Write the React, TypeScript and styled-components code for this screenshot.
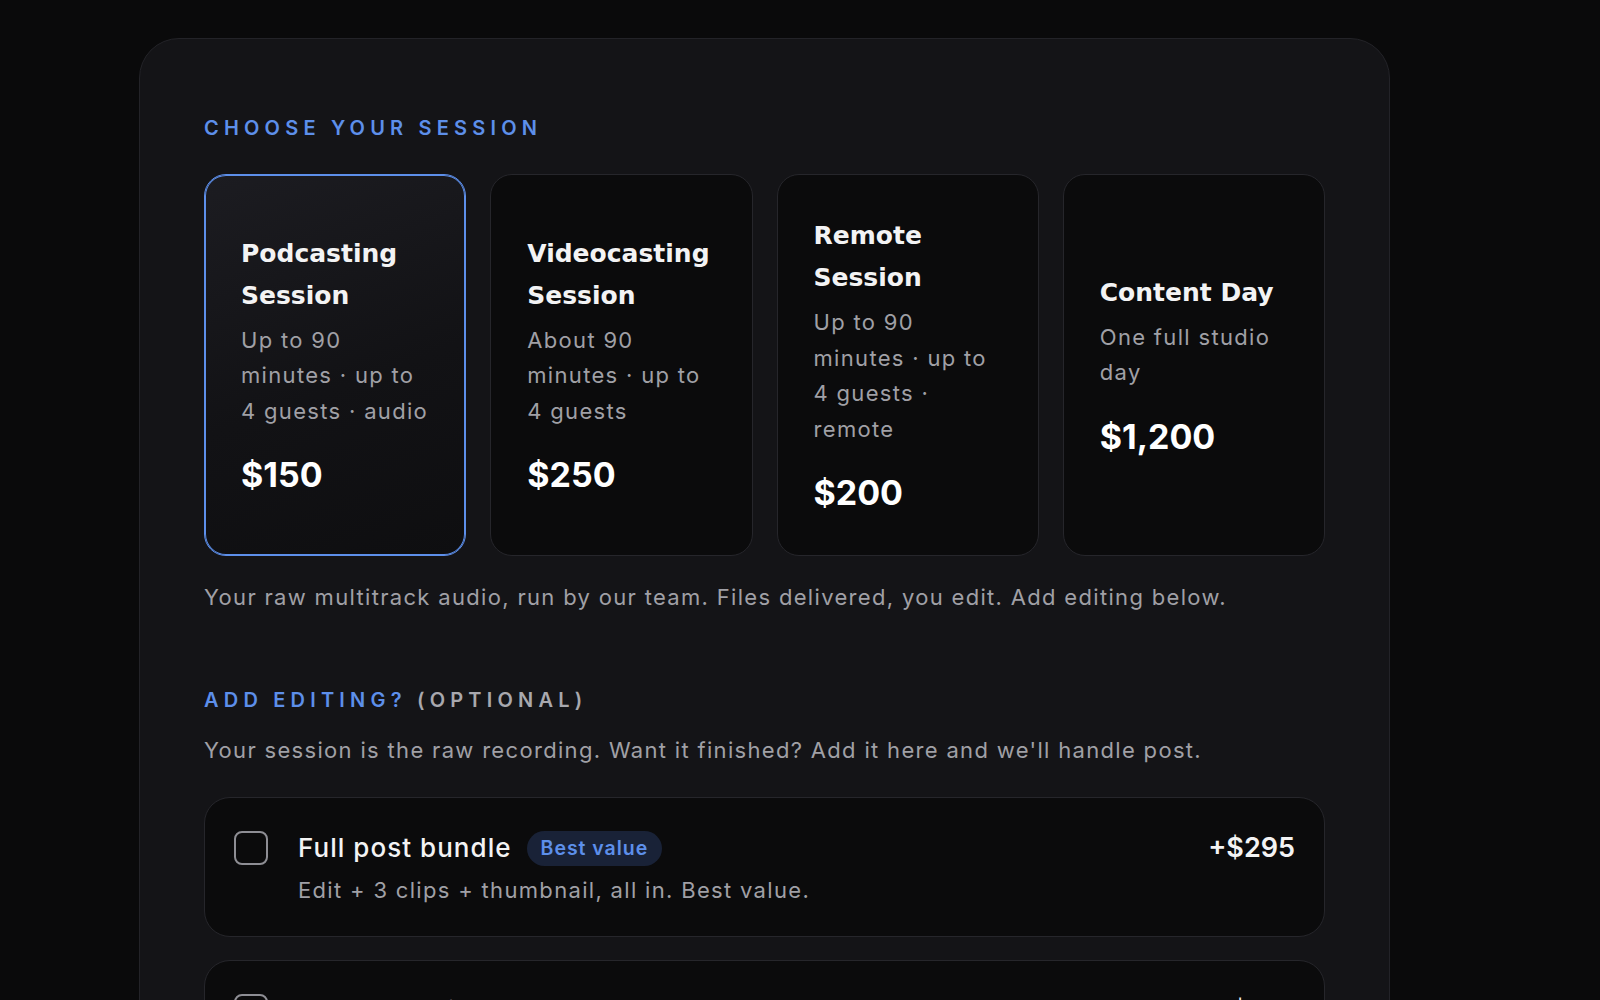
import React, { useState } from "react";
import styled, { createGlobalStyle, css } from "styled-components";

const GlobalStyle = createGlobalStyle`
  html, body {
    margin: 0;
    padding: 0;
    background: #0a0a0b;
  }
  body {
    font-family: Inter, "Noto Sans", sans-serif;
    -webkit-font-smoothing: antialiased;
    overflow: hidden;
  }
  * { box-sizing: border-box; }
`;

const Page = styled.div`
  min-height: 100vh;
  padding: 38px 0 0 139px;
`;

const Panel = styled.section`
  width: 1251px;
  background: #141417;
  border: 1px solid #232328;
  border-radius: 40px;
  padding: 77px 64px 64px;
  display: flex;
  flex-direction: column;
`;

const Eyebrow = styled.h2`
  margin: 0;
  font-family: Inter, sans-serif;
  font-size: 20px;
  line-height: 24px;
  font-weight: 600;
  letter-spacing: 0.26em;
  text-transform: uppercase;
  color: #5d8fea;
`;

const EyebrowMuted = styled.span`
  color: #a8a8ae;
`;

const SessionHeading = styled(Eyebrow)`
  margin-bottom: 34px;
`;

const CardGrid = styled.div`
  display: grid;
  grid-template-columns: repeat(4, 1fr);
  gap: 24px;
`;

const SessionCard = styled.button<{ $selected?: boolean }>`
  all: unset;
  cursor: pointer;
  height: 380px;
  border-radius: 22px;
  border: 1px solid #26262b;
  background: #0b0b0c;
  padding: 0 32px 0 36px;
  display: flex;
  flex-direction: column;
  justify-content: center;
  ${(p) =>
    p.$selected &&
    css`
      border-color: #5d8fea;
      box-shadow: inset 0 0 0 1px #5d8fea;
      background: linear-gradient(160deg, #1c1c21 0%, #121215 55%, #0e0e10 100%);
    `}
`;

const CardTitle = styled.h3`
  margin: 0;
  font-family: "DejaVu Sans", sans-serif;
  font-size: 25px;
  line-height: 42px;
  font-weight: 700;
  color: #f3f3f4;
`;

const CardDesc = styled.p`
  margin: 6px 0 0;
  font-size: 22px;
  line-height: 35.5px;
  letter-spacing: 0.06em;
  color: #a0a0a6;
`;

const CardPrice = styled.div`
  margin-top: 24px;
  font-size: 34px;
  line-height: 44px;
  font-weight: 700;
  color: #ffffff;
`;

const Note = styled.p`
  margin: 24px 0 0;
  font-size: 22px;
  line-height: 35px;
  letter-spacing: 0.06em;
  color: #a0a0a6;
`;

const EditingHeading = styled(Eyebrow)`
  margin-top: 73px;
`;

const EditingNote = styled(Note)`
  margin-top: 21px;
`;

const AddonList = styled.div`
  margin-top: 29px;
  display: flex;
  flex-direction: column;
  gap: 23px;
`;

const AddonRow = styled.label`
  display: flex;
  align-items: flex-start;
  gap: 30px;
  padding: 32px 29px 28px;
  border: 1px solid #26262b;
  border-radius: 26px;
  background: #0b0b0c;
  cursor: pointer;
`;

const Checkbox = styled.span<{ $checked?: boolean }>`
  flex: none;
  width: 34px;
  height: 34px;
  margin-top: 1px;
  border: 2px solid #8e8e94;
  border-radius: 8px;
  background: ${(p) => (p.$checked ? "#5d8fea" : "transparent")};
`;

const AddonBody = styled.div`
  flex: 1;
  display: flex;
  flex-direction: column;
  gap: 7px;
`;

const AddonTitleRow = styled.div`
  display: flex;
  align-items: center;
  gap: 15px;
`;

const AddonTitle = styled.span`
  font-size: 26px;
  line-height: 36px;
  font-weight: 500;
  letter-spacing: 0.04em;
  color: #f3f3f4;
`;

const Badge = styled.span`
  display: inline-flex;
  align-items: center;
  height: 35px;
  padding: 0 14px;
  border-radius: 18px;
  background: #192237;
  color: #5d8fea;
  font-size: 19.5px;
  font-weight: 600;
  letter-spacing: 0.05em;
`;

const AddonDesc = styled.span`
  font-size: 22px;
  line-height: 35px;
  letter-spacing: 0.06em;
  color: #a0a0a6;
`;

const AddonPrice = styled.span`
  flex: none;
  font-size: 27px;
  line-height: 36px;
  font-weight: 600;
  color: #f3f3f4;
`;

type Session = { id: string; title: string; desc: string; price: string };

const sessions: Session[] = [
  { id: "podcast", title: "Podcasting Session", desc: "Up to 90 minutes · up to 4 guests · audio", price: "$150" },
  { id: "video", title: "Videocasting Session", desc: "About 90 minutes · up to 4 guests", price: "$250" },
  { id: "remote", title: "Remote Session", desc: "Up to 90 minutes · up to 4 guests · remote", price: "$200" },
  { id: "day", title: "Content Day", desc: "One full studio day", price: "$1,200" },
];

type Addon = { id: string; title: string; badge?: string; desc: string; price: string };

const addons: Addon[] = [
  { id: "bundle", title: "Full post bundle", badge: "Best value", desc: "Edit + 3 clips + thumbnail, all in. Best value.", price: "+$295" },
  { id: "edit", title: "Podcast edit", desc: "Cleanup, levels and a polished final mix.", price: "+$150" },
];

export default function App() {
  const [selected, setSelected] = useState("podcast");
  const [checked, setChecked] = useState<Record<string, boolean>>({});

  return (
    <Page>
      <GlobalStyle />
      <Panel>
        <SessionHeading>Choose your session</SessionHeading>
        <CardGrid>
          {sessions.map((s) => (
            <SessionCard key={s.id} $selected={selected === s.id} onClick={() => setSelected(s.id)}>
              <CardTitle>{s.title}</CardTitle>
              <CardDesc>{s.desc}</CardDesc>
              <CardPrice>{s.price}</CardPrice>
            </SessionCard>
          ))}
        </CardGrid>
        <Note>Your raw multitrack audio, run by our team. Files delivered, you edit. Add editing below.</Note>

        <EditingHeading>
          Add editing? <EyebrowMuted>(optional)</EyebrowMuted>
        </EditingHeading>
        <EditingNote>Your session is the raw recording. Want it finished? Add it here and we'll handle post.</EditingNote>
        <AddonList>
          {addons.map((a) => (
            <AddonRow key={a.id} onClick={() => setChecked((c) => ({ ...c, [a.id]: !c[a.id] }))}>
              <Checkbox $checked={!!checked[a.id]} />
              <AddonBody>
                <AddonTitleRow>
                  <AddonTitle>{a.title}</AddonTitle>
                  {a.badge && <Badge>{a.badge}</Badge>}
                </AddonTitleRow>
                <AddonDesc>{a.desc}</AddonDesc>
              </AddonBody>
              <AddonPrice>{a.price}</AddonPrice>
            </AddonRow>
          ))}
        </AddonList>
      </Panel>
    </Page>
  );
}
